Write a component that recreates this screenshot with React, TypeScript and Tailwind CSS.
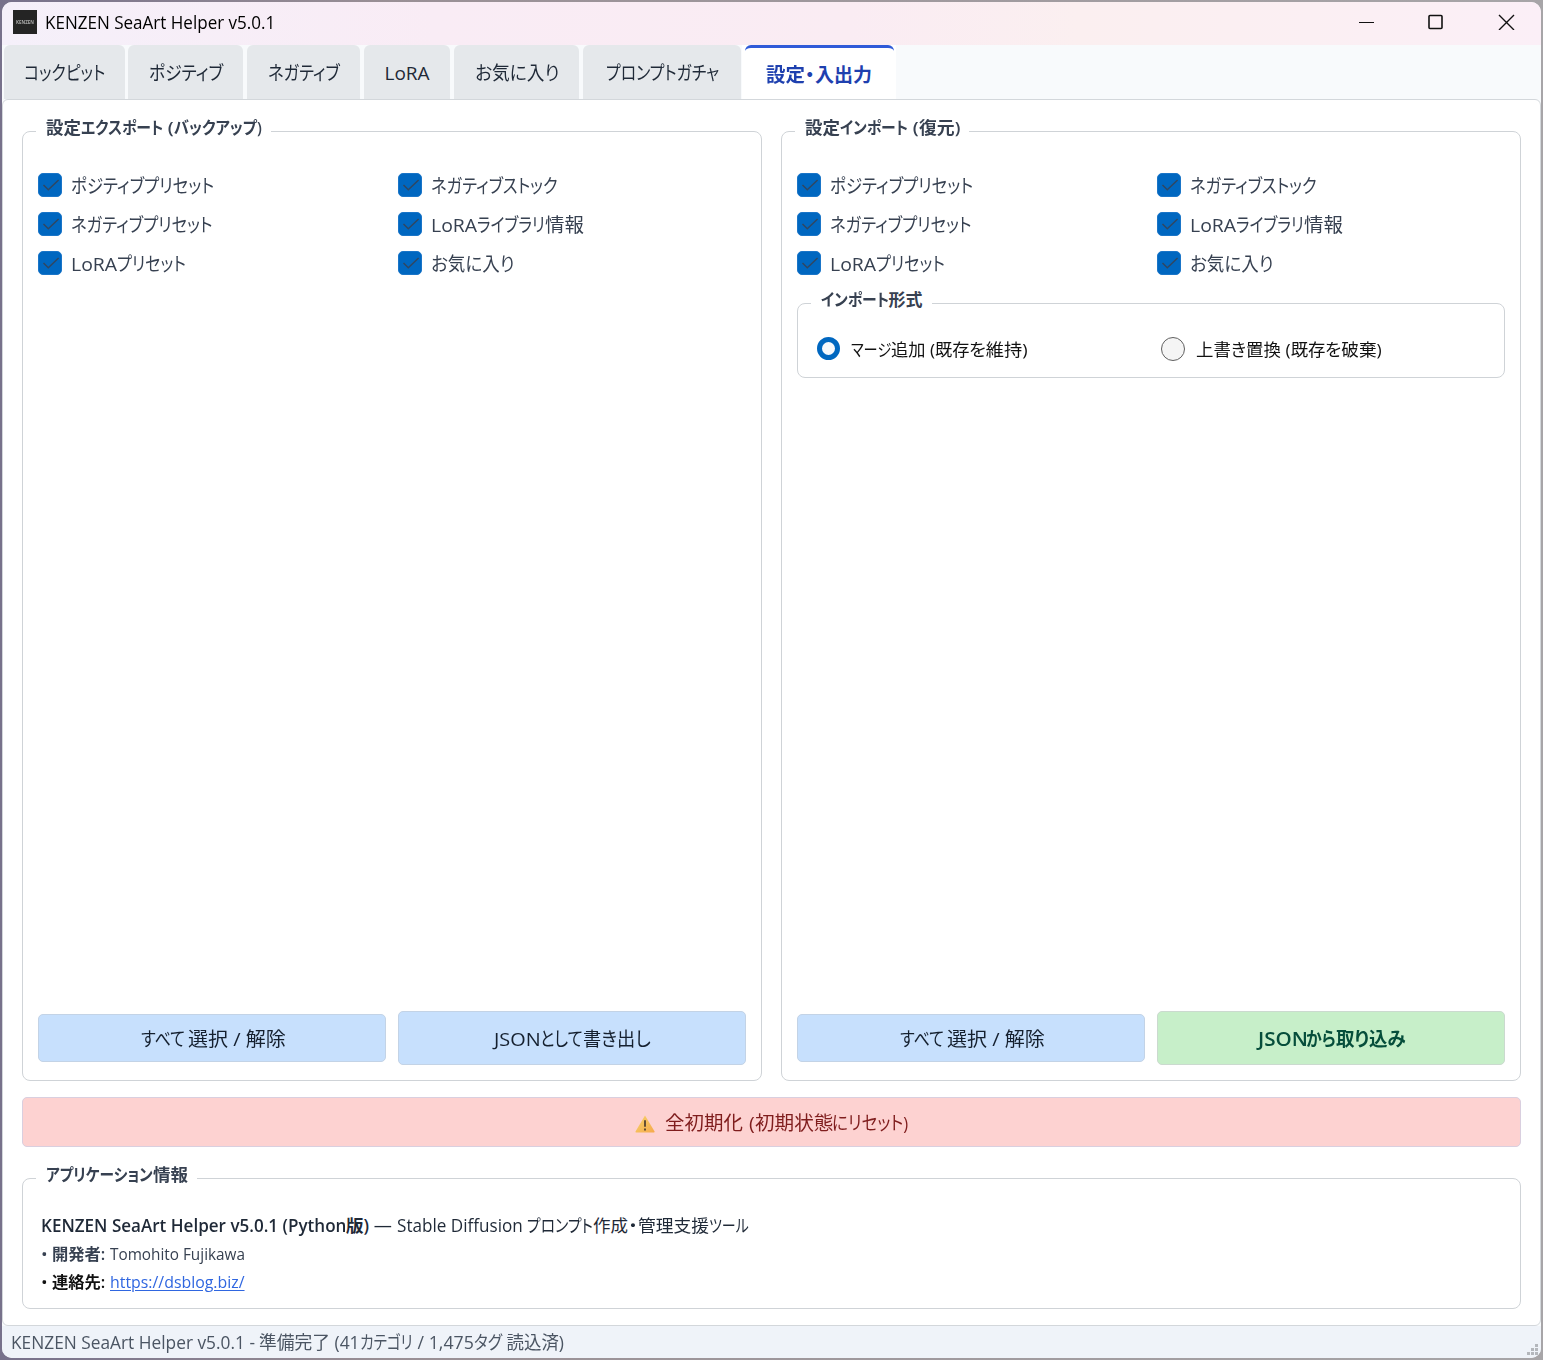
import { useLayoutEffect, useRef, useState, type ReactNode } from "react";

/** One line of text, condensed or widened horizontally to a given width. */
function Fit({ w, children, className = "" }: { w: number; children: ReactNode; className?: string }) {
  const ref = useRef<HTMLSpanElement>(null);
  const [scale, setScale] = useState(1);
  useLayoutEffect(() => {
    if (ref.current) setScale(w / ref.current.offsetWidth);
  }, [w]);
  return (
    <span className="inline-block whitespace-pre" style={{ width: w }}>
      <span
        ref={ref}
        className={"inline-block origin-left whitespace-pre [font-feature-settings:'palt'] " + className}
        style={{ transform: `scaleX(${scale})` }}
      >
        {children}
      </span>
    </span>
  );
}

type Run = [string, number];

function Runs({ runs }: { runs: Run[] }) {
  return (
    <span className="flex shrink-0">
      {runs.map(([text, w], i) => (
        <Fit key={i} w={w}>{text}</Fit>
      ))}
    </span>
  );
}

const tabs: { runs: Run[]; box: string }[] = [
  { runs: [["コックピット", 81]], box: "w-[121px] mr-[3px]" },
  { runs: [["ポジティブ", 74]], box: "w-[115px] mr-1" },
  { runs: [["ネガティブ", 72]], box: "w-[113px] mr-1" },
  { runs: [["LoRA", 45]], box: "w-[86px] mr-1" },
  { runs: [["お気に入り", 84]], box: "w-[125px] mr-1" },
  { runs: [["プロンプトガチャ", 113]], box: "w-[158px] mr-1" },
];

const options: Run[][] = [
  [["ポジティブプリセット", 143]],
  [["ネガティブストック", 127]],
  [["ネガティブプリセット", 142]],
  [["LoRA", 46], ["ライブラリ", 68], ["情報", 39]],
  [["LoRA", 46], ["プリセット", 69]],
  [["お気に入り", 83]],
];

function Check({ runs }: { runs: Run[] }) {
  return (
    <label className="flex h-6 items-center gap-[9px] text-[#374151]">
      <span className="flex size-6 items-center justify-center rounded-[5px] border border-[#1a75c8] bg-[#0067c0]">
        <svg viewBox="0 0 24 24" className="size-6 shrink-0" fill="none" stroke="#304761" strokeWidth="1.5">
          <path d="M5.5 12l4.8 4.8L20.6 7" />
        </svg>
      </span>
      <span className="pt-px">
        <Runs runs={runs} />
      </span>
    </label>
  );
}

function Options() {
  return (
    <div className="grid grid-cols-2 gap-x-3 gap-y-[15px]">
      {options.map((runs, i) => (
        <Check key={i} runs={runs} />
      ))}
    </div>
  );
}

function Group({ legend, className, children }: { legend: Run[]; className: string; children: ReactNode }) {
  return (
    <section className={"relative rounded-lg border border-[#cfd3d7] bg-white " + className}>
      <div className="absolute -top-[18px] left-[13px] flex h-7 items-center bg-white px-[9.5px] text-[17px] leading-7 font-semibold text-[#374151]">
        <Runs runs={legend} />
      </div>
      {children}
    </section>
  );
}

const blueButton =
  "flex items-center justify-center rounded-[5px] border border-[#c3d3e6] bg-[#c7e0fd] pt-[2px] text-[#15202f]";

function SelectAll() {
  return (
    <button className={blueButton + " h-12"}>
      <Runs runs={[["すべて", 44], ["選択 / 解除", 98]]} />
    </button>
  );
}

function WarningIcon() {
  return (
    <svg viewBox="0 0 20 18" className="mt-[3px] mr-[9px] h-[18px] w-5">
      <defs>
        <linearGradient id="amber" x1="0" y1="0" x2="1" y2="1">
          <stop offset="0" stopColor="#f7d36b" />
          <stop offset="1" stopColor="#f5a94b" />
        </linearGradient>
      </defs>
      <path d="M10 .6 19.6 16.6Q19.8 17.6 18.8 17.6H1.2Q.2 17.6.5 16.6Z" fill="url(#amber)" />
      <path d="M10 5.2v6.6M10 13.5v2" stroke="#4a3a2e" strokeWidth="1.7" />
    </svg>
  );
}

export default function App() {
  return (
    <div className="h-[1360px] w-[1543px] bg-[linear-gradient(90deg,#77718b_0%,#998f95_25%,#a7a5a8_100%)] p-0.5 font-['Open_Sans','Noto_Sans_CJK_JP',sans-serif] text-[19px] leading-6">
      <div className="flex h-[1356px] w-[1539px] flex-col overflow-hidden rounded-[10px] bg-[#f8fafc]">
        <header className="flex h-[43px] shrink-0 items-center bg-[linear-gradient(90deg,#f5f0fa_0%,#f9ecf5_28%,#faecf3_55%,#fbeff0_70%,#fbeff3_85%,#fbeff7_100%)] pb-[3px] pl-[11px] text-black">
          <span className="flex h-6 w-6 items-center justify-center bg-[#242424] text-[6px] leading-none font-bold text-[#aaa]">
            <Fit w={18} className="blur-[0.4px]">KENZEN</Fit>
          </span>
          <span className="ml-2 flex text-[18px]">
            <Fit w={230}>KENZEN SeaArt Helper v5.0.1</Fit>
          </span>
          <svg viewBox="0 0 157 16" className="mr-[26px] ml-auto h-4 w-[157px]" fill="none" stroke="#111" strokeWidth="1.4">
            <path d="M1 8.5h15" strokeWidth="1" />
            <rect x="71" y="1.5" width="13" height="13" rx="1" strokeWidth="1.6" />
            <path d="M141 1l15 15M156 1l-15 15" />
          </svg>
        </header>

        <nav className="flex h-[54px] shrink-0 pl-0.5">
          {tabs.map((t, i) => (
            <div
              key={i}
              className={"flex shrink-0 items-center justify-center rounded-t-md bg-[#e5e8eb] pt-[2px] text-[#1f2937] " + t.box}
            >
              <Runs runs={t.runs} />
            </div>
          ))}
          <div className="-ml-[3px] flex w-[154px] justify-center bg-white">
            <div className="flex w-[149px] items-center justify-center rounded-t-md border-t-[3px] border-[#2f5bd8] pt-[2px] font-semibold text-[#1e40af]">
              <Runs runs={[["設定", 39], ["・", 10], ["入出力", 57]]} />
            </div>
          </div>
        </nav>

        <main className="flex h-[1227px] shrink-0 flex-col rounded-md border border-[#d3d7db] bg-white px-[19px]">
          <div className="mt-[31px] flex gap-[19px]">
            <Group
              legend={[["設定", 35], ["エクスポート", 82], [" (", 11], ["バックアップ)", 88]]}
              className="flex h-[950px] w-[740px] flex-col justify-between px-[15px] pt-[41px] pb-[15px]"
            >
              <Options />
              <div className="grid grid-cols-2 items-center gap-x-3">
                <SelectAll />
                <button className={blueButton + " h-[54px]"}>
                  <Runs runs={[["JSON", 47], ["として", 43], ["書き出し", 68]]} />
                </button>
              </div>
            </Group>

            <Group
              legend={[["設定", 35], ["インポート", 68], [" (", 11], ["復元)", 41]]}
              className="flex h-[950px] w-[740px] flex-col px-[15px] pt-[41px] pb-[15px]"
            >
              <Options />
              <Group
                legend={[["インポート", 68], ["形式", 34]]}
                className="mt-[28px] flex h-[75px] items-center pt-[16px] pl-[19px] text-[17px] text-[#111]"
              >
                <div className="flex w-[345px] items-center gap-[11px]">
                  <span className="size-[23px] rounded-full border-[5.5px] border-[#0067c0] bg-[#f5f8fc]" />
                  <span className="pt-[2px]">
                    <Runs runs={[["マージ", 40], ["追加 (既存", 78], ["を維持)", 59]]} />
                  </span>
                </div>
                <div className="flex items-center gap-[11px]">
                  <span className="-ml-px size-6 rounded-full border-[1.5px] border-[#606060] bg-[#f5f5f5]" />
                  <span className="pt-[2px]">
                    <Runs runs={[["上書き置換", 85], [" (既存", 44], ["を破棄)", 57]]} />
                  </span>
                </div>
              </Group>
              <div className="mt-auto grid grid-cols-2 items-center gap-x-3">
                <SelectAll />
                <button className="flex h-[54px] items-center justify-center rounded-[5px] border border-[#cbdacf] bg-[#c7efc9] pt-[2px] font-semibold text-[#064e3b]">
                  <Runs runs={[["JSON", 50], ["から", 30], ["取り込み", 70]]} />
                </button>
              </div>
            </Group>
          </div>

          <button className="mt-4 flex h-[50px] shrink-0 items-center justify-center rounded-[5px] border border-[#d9cfdf] bg-[#fdd2d1] text-[#7f1d1d]">
            <WarningIcon />
            <span className="pt-px">
              <Runs runs={[["全初期化", 78], [" (初期状態", 90], ["にリセット)", 76]]} />
            </span>
          </button>

          <Group
            legend={[["アプリケーション", 107], ["情報", 35]]}
            className="mt-[31px] h-[131px] shrink-0 pt-[31px] pl-[18px] text-[17px] text-[#1f2937]"
          >
            <p className="flex h-[29px] items-center text-[17.5px]">
              <span className="flex font-semibold">
                <Runs runs={[["KENZEN SeaArt Helper v5.0.1 (Python", 305], ["版)", 23]]} />
              </span>
              <Runs runs={[[" — ", 28], ["Stable Diffusion ", 130], ["プロンプト", 66], ["作成", 35], ["・", 10], ["管理支援", 71], ["ツール", 40]]} />
            </p>
            <p className="flex h-[29px] items-center text-[16px] text-[#374151]">
              <Fit w={11}>• </Fit>
              <span className="flex font-semibold"><Fit w={58}>開発者: </Fit></span>
              <Fit w={135}>Tomohito Fujikawa</Fit>
            </p>
            <p className="flex h-[28px] items-center text-[16px] text-[#111]">
              <Fit w={11}>• </Fit>
              <span className="flex font-semibold"><Fit w={58}>連絡先: </Fit></span>
              <a className="flex text-[#2f66e0]">
                <Fit w={135} className="underline underline-offset-2">https://dsblog.biz/</Fit>
              </a>
            </p>
          </Group>
        </main>

        <footer className="flex flex-1 items-center bg-[#eff3f9] pl-[9px] text-[18px] text-[#4b5563]">
          <Runs runs={[["KENZEN SeaArt Helper v5.0.1 - ", 248], ["準備完了", 71], [" (41", 30], ["カテゴリ", 53], [" / 1,475", 61], ["タグ", 28], [" 読込済)", 62]]} />
          <svg viewBox="0 0 12 12" className="mt-[15px] mr-[2px] ml-auto size-3" fill="#b4b7bc">
            <path d="M8 0h3v3H8zM4 4h3v3H4zM8 4h3v3H8zM0 8h3v3H0zM4 8h3v3H4zM8 8h3v3H8z" />
          </svg>
        </footer>
      </div>
    </div>
  );
}
